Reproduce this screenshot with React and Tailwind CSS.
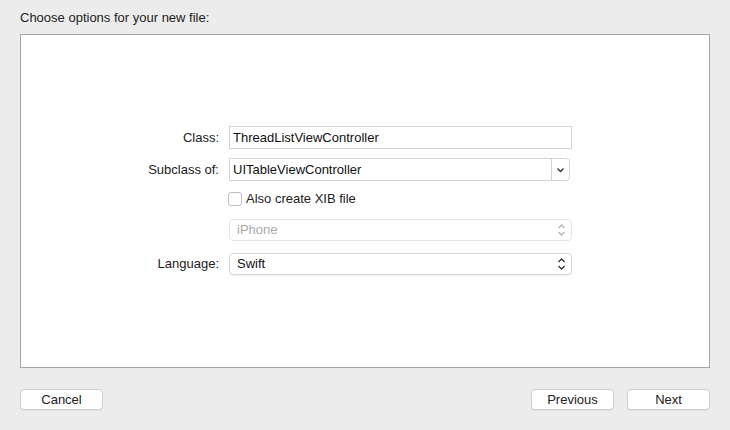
const font = { fontFamily: '"Liberation Sans", Arial, sans-serif' };

const Updown = ({ light }) => (
  <svg width="9" height="14" viewBox="0 0 9 14" className="mr-[5px]">
    <path d="M1.5 5 L4.5 2 L7.5 5 M1.5 9 L4.5 12 L7.5 9" fill="none" stroke={light ? "#b5b5b5" : "#333"} strokeWidth="1.3" />
  </svg>
);

const Label = ({ children }) => (
  <div className="w-[208px] text-right pr-[10px] text-[13px] text-[#222]">{children}</div>
);

const Btn = ({ children }) => (
  <button className="w-[83px] h-[21px] bg-white border border-[#cfcfcf] rounded-[4px] shadow-[0_1px_0_rgba(0,0,0,0.05)] text-[13px] text-[#222] leading-none">
    {children}
  </button>
);

export default function App() {
  return (
    <div className="w-[730px] h-[430px] bg-[#ececec] flex flex-col px-[20px]" style={font}>
      <div className="h-[34px] pt-[10px] text-[13px] text-[#222] leading-[16px]">Choose options for your new file:</div>
      <div className="h-[334px] w-[690px] bg-white border border-[#a5a5a5] flex flex-col pt-[91px]">
        <div className="flex items-center h-[23px]">
          <Label>Class:</Label>
          <div className="w-[343px] h-[23px] border border-[#d4d4d4] flex items-center px-[3px] text-[13px] text-[#111]">
            ThreadListViewController
          </div>
        </div>
        <div className="flex items-center h-[23px] mt-[9px]">
          <Label>Subclass of:</Label>
          <div className="w-[341px] h-[23px] border border-[#d4d4d4] rounded-r-[4px] flex items-center text-[13px] text-[#111]">
            <span className="flex-1 px-[3px]">UITableViewController</span>
            <div className="w-[18px] h-full border-l border-[#d4d4d4] flex items-center justify-center">
              <svg width="9" height="6" viewBox="0 0 9 6">
                <path d="M1.5 1.5 L4.5 4.5 L7.5 1.5" fill="none" stroke="#333" strokeWidth="1.4" />
              </svg>
            </div>
          </div>
        </div>
        <div className="flex items-center h-[14px] mt-[11px]">
          <div className="w-[207px]" />
          <div className="w-[14px] h-[14px] border border-[#bdbdbd] rounded-[3px] bg-white" />
          <span className="ml-[4px] text-[13px] text-[#222]">Also create XIB file</span>
        </div>
        <div className="flex items-center h-[22px] mt-[13px]">
          <div className="w-[208px]" />
          <div className="w-[343px] h-[22px] border border-[#e6e6e6] rounded-[4px] flex items-center text-[13px] text-[#a8a8a8]">
            <span className="flex-1 pl-[7px]">iPhone</span>
            <Updown light />
          </div>
        </div>
        <div className="flex items-center h-[22px] mt-[12px]">
          <Label>Language:</Label>
          <div className="w-[343px] h-[22px] border border-[#d4d4d4] rounded-[4px] shadow-[0_1px_0_rgba(0,0,0,0.06)] flex items-center text-[13px] text-[#111]">
            <span className="flex-1 pl-[7px]">Swift</span>
            <Updown />
          </div>
        </div>
      </div>
      <div className="flex items-center mt-[21px]">
        <Btn>Cancel</Btn>
        <div className="flex-1" />
        <Btn>Previous</Btn>
        <div className="w-[13px]" />
        <Btn>Next</Btn>
      </div>
    </div>
  );
}
